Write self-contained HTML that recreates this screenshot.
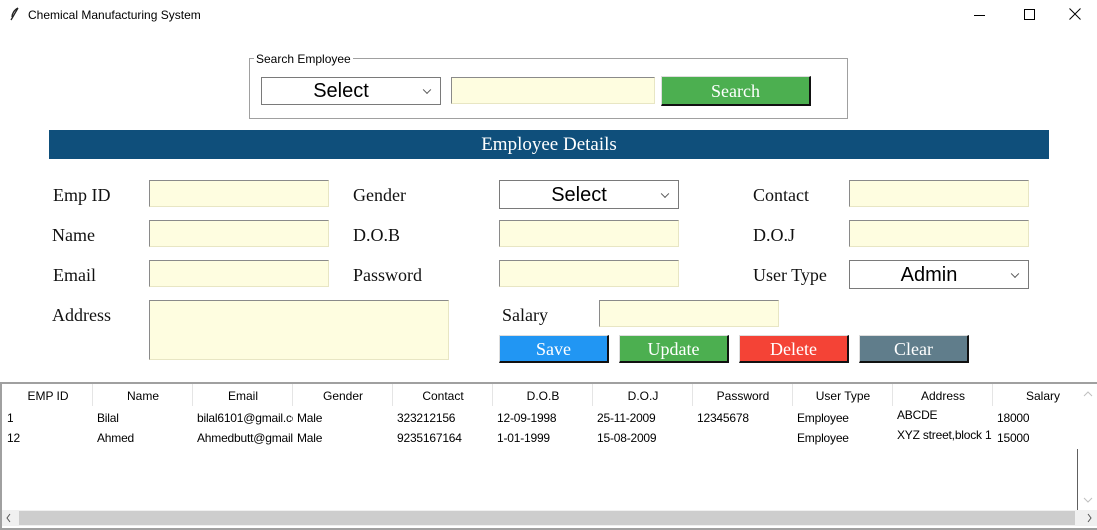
<!DOCTYPE html><html><head><style>
*{margin:0;padding:0;box-sizing:border-box}
body{width:1097px;height:530px;background:#fff;position:relative;overflow:hidden;font-family:"Liberation Serif",serif}
.a{position:absolute}
.t{font-family:"Liberation Sans",sans-serif;font-size:12px;color:#000}
.lbl{position:absolute;font-size:18px;color:#111}
.in{position:absolute;background:#fefde0;border:1px solid #e8e6c4;border-top-color:#8a8a8a;border-left-color:#8a8a8a}
.cb{position:absolute;background:#fff;border:1px solid #7a7a7a;font-family:"Liberation Sans",sans-serif;font-size:20px;text-align:center;color:#000}
.cb:after{content:"";position:absolute;right:10px;top:50%;width:5px;height:5px;border-right:1px solid #555;border-bottom:1px solid #555;transform:translateY(-70%) rotate(45deg)}
.btn{position:absolute;color:#fff;font-size:18px;text-align:center;border-right:2px solid #111;border-bottom:2px solid #111;border-top:1px solid #ddd;border-left:1px solid #ddd}
.h{position:absolute;top:389px;font-family:"Liberation Sans",sans-serif;font-size:12px;text-align:center;width:100px}
.c{position:absolute;font-family:"Liberation Sans",sans-serif;font-size:12px;white-space:nowrap;overflow:hidden;letter-spacing:-0.2px}
</style></head><body>
<svg class="a" style="left:8px;top:7px" width="12" height="14"><path d="M3 13 L10 1 M10 1 C6 3 4 7 4 10" stroke="#222" stroke-width="1.3" fill="none"/></svg>
<div class="a t" style="left:28px;top:8px">Chemical Manufacturing System</div>
<div class="a" style="left:974px;top:15px;width:11px;border-top:1px solid #000"></div>
<div class="a" style="left:1024px;top:9px;width:11px;height:11px;border:1px solid #000"></div>
<svg class="a" style="left:1069px;top:8px" width="12" height="12"><path d="M0.5 0.5 L11.5 11.5 M11.5 0.5 L0.5 11.5" stroke="#000" stroke-width="1"/></svg>

<div class="a" style="left:249px;top:58px;width:599px;height:61px;border:1px solid #a0a0a0"></div>
<div class="a t" style="left:254px;top:52px;background:#fff;padding:0 2px">Search Employee</div>
<div class="cb" style="left:261px;top:77px;width:180px;height:28px;line-height:27px;padding-right:20px">Select</div>
<div class="in" style="left:451px;top:77px;width:204px;height:27px"></div>
<div class="btn" style="left:661px;top:76px;width:150px;height:30px;line-height:28px;background:#4caf50">Search</div>

<div class="a" style="left:49px;top:130px;width:1000px;height:29px;background:#0f4f7b;color:#fff;font-size:19px;text-align:center;line-height:29px">Employee Details</div>

<div class="lbl" style="left:53px;top:185px">Emp ID</div>
<div class="lbl" style="left:52px;top:225px">Name</div>
<div class="lbl" style="left:53px;top:265px">Email</div>
<div class="lbl" style="left:52px;top:305px">Address</div>
<div class="in" style="left:149px;top:180px;width:180px;height:27px"></div>
<div class="in" style="left:149px;top:220px;width:180px;height:27px"></div>
<div class="in" style="left:149px;top:260px;width:180px;height:27px"></div>
<div class="in" style="left:149px;top:300px;width:300px;height:60px"></div>

<div class="lbl" style="left:353px;top:185px">Gender</div>
<div class="lbl" style="left:353px;top:225px">D.O.B</div>
<div class="lbl" style="left:353px;top:265px">Password</div>
<div class="cb" style="left:499px;top:180px;width:180px;height:29px;line-height:28px;padding-right:20px">Select</div>
<div class="in" style="left:499px;top:220px;width:180px;height:27px"></div>
<div class="in" style="left:499px;top:260px;width:180px;height:27px"></div>
<div class="lbl" style="left:502px;top:305px">Salary</div>
<div class="in" style="left:599px;top:300px;width:180px;height:27px"></div>

<div class="lbl" style="left:753px;top:185px">Contact</div>
<div class="lbl" style="left:753px;top:225px">D.O.J</div>
<div class="lbl" style="left:753px;top:265px">User Type</div>
<div class="in" style="left:849px;top:180px;width:180px;height:27px"></div>
<div class="in" style="left:849px;top:220px;width:180px;height:27px"></div>
<div class="cb" style="left:849px;top:260px;width:180px;height:29px;line-height:28px;padding-right:20px">Admin</div>

<div class="btn" style="left:499px;top:335px;width:110px;height:28px;line-height:27px;background:#2196f3">Save</div>
<div class="btn" style="left:619px;top:335px;width:110px;height:28px;line-height:27px;background:#4caf50">Update</div>
<div class="btn" style="left:739px;top:335px;width:110px;height:28px;line-height:27px;background:#f44336">Delete</div>
<div class="btn" style="left:859px;top:335px;width:110px;height:28px;line-height:27px;background:#607d8b">Clear</div>

<div class="a" style="left:0;top:382px;width:1097px;height:148px;border:2px solid #a0a0a0;border-right:none"></div>
<div class="h" style="left:-2px">EMP ID</div>
<div class="h" style="left:93px">Name</div>
<div class="h" style="left:193px">Email</div>
<div class="h" style="left:293px">Gender</div>
<div class="h" style="left:393px">Contact</div>
<div class="h" style="left:493px">D.O.B</div>
<div class="h" style="left:593px">D.O.J</div>
<div class="h" style="left:693px">Password</div>
<div class="h" style="left:793px">User Type</div>
<div class="h" style="left:893px">Address</div>
<div class="h" style="left:993px">Salary</div>
<div class="a" style="left:92px;top:384px;width:1px;height:22px;background:#e5e5e5"></div>
<div class="a" style="left:192px;top:384px;width:1px;height:22px;background:#e5e5e5"></div>
<div class="a" style="left:292px;top:384px;width:1px;height:22px;background:#e5e5e5"></div>
<div class="a" style="left:392px;top:384px;width:1px;height:22px;background:#e5e5e5"></div>
<div class="a" style="left:492px;top:384px;width:1px;height:22px;background:#e5e5e5"></div>
<div class="a" style="left:592px;top:384px;width:1px;height:22px;background:#e5e5e5"></div>
<div class="a" style="left:692px;top:384px;width:1px;height:22px;background:#e5e5e5"></div>
<div class="a" style="left:792px;top:384px;width:1px;height:22px;background:#e5e5e5"></div>
<div class="a" style="left:892px;top:384px;width:1px;height:22px;background:#e5e5e5"></div>
<div class="a" style="left:992px;top:384px;width:1px;height:22px;background:#e5e5e5"></div>

<div class="c" style="left:7px;top:411px">1</div>
<div class="c" style="left:97px;top:411px">Bilal</div>
<div class="c" style="left:197px;top:411px;width:96px">bilal6101@gmail.com</div>
<div class="c" style="left:297px;top:411px">Male</div>
<div class="c" style="left:397px;top:411px">323212156</div>
<div class="c" style="left:497px;top:411px">12-09-1998</div>
<div class="c" style="left:597px;top:411px">25-11-2009</div>
<div class="c" style="left:697px;top:411px">12345678</div>
<div class="c" style="left:797px;top:411px">Employee</div>
<div class="c" style="left:897px;top:408px">ABCDE</div>
<div class="c" style="left:997px;top:411px">18000</div>

<div class="c" style="left:7px;top:431px">12</div>
<div class="c" style="left:97px;top:431px">Ahmed</div>
<div class="c" style="left:197px;top:431px;width:96px">Ahmedbutt@gmail.com</div>
<div class="c" style="left:297px;top:431px">Male</div>
<div class="c" style="left:397px;top:431px">9235167164</div>
<div class="c" style="left:497px;top:431px">1-01-1999</div>
<div class="c" style="left:597px;top:431px">15-08-2009</div>
<div class="c" style="left:797px;top:431px">Employee</div>
<div class="c" style="left:897px;top:428px;width:95px">XYZ street,block 1</div>
<div class="c" style="left:997px;top:431px">15000</div>

<div class="a" style="left:1079px;top:384px;width:18px;height:126px;background:#fff"></div>
<div class="a" style="left:1077px;top:449px;width:1px;height:61px;background:#606060"></div>
<svg class="a" style="left:1083px;top:390px" width="10" height="120"><path d="M1 6 L5 2 L9 6 M1 108 L5 112 L9 108" stroke="#c0c0c0" fill="none"/></svg>
<div class="a" style="left:2px;top:510px;width:1095px;height:16px;background:#f0f0f0"></div>
<div class="a" style="left:19px;top:511px;width:1056px;height:14px;background:#cdcdcd"></div>
<svg class="a" style="left:5px;top:513px;" width="1090" height="10"><path d="M5 1 L2 5 L5 9 M1083 1 L1086 5 L1083 9" stroke="#555" fill="none"/></svg>
</body></html>
